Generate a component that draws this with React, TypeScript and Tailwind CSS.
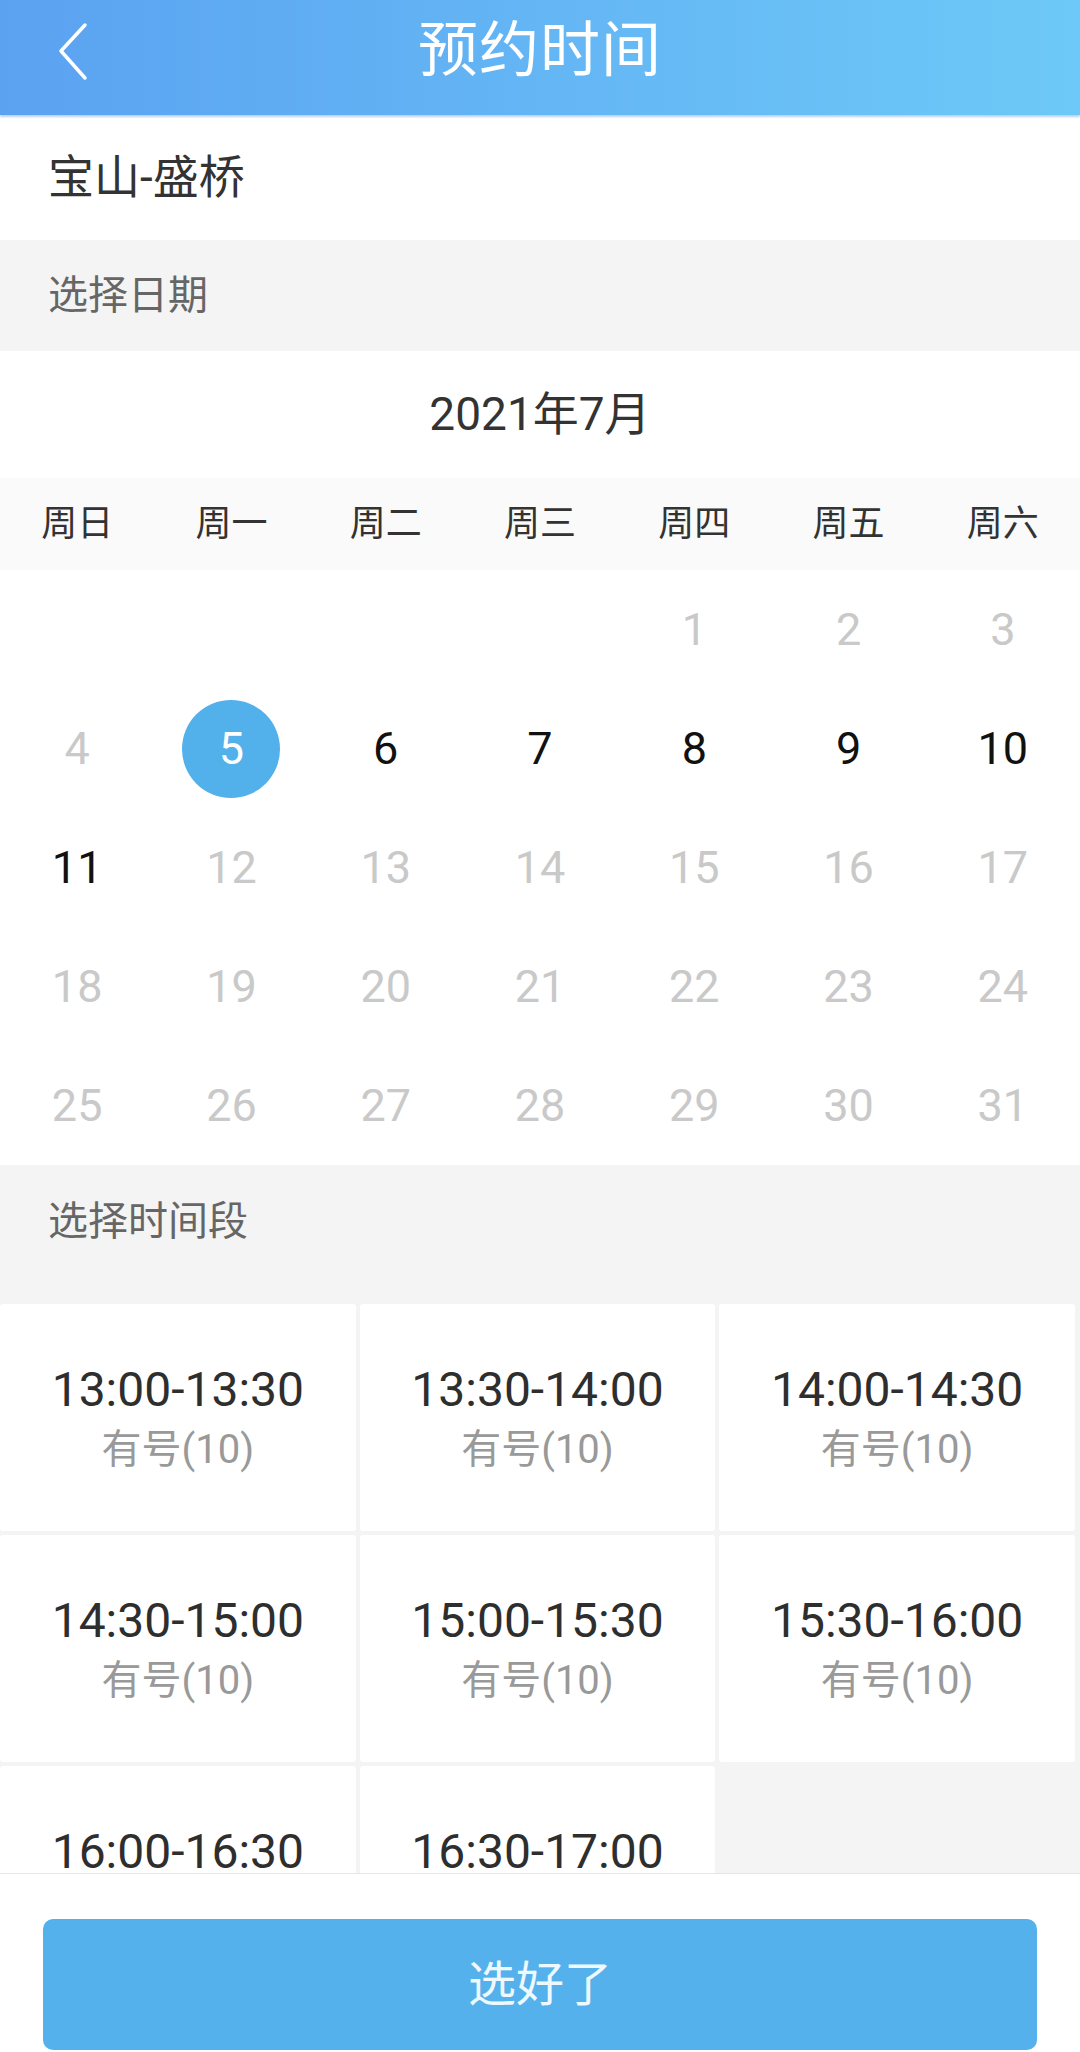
import React from 'react';

const font = { fontFamily: 'Roboto, "Noto Sans CJK SC", "Noto Sans", sans-serif' };

const weekdays = ['周日', '周一', '周二', '周三', '周四', '周五', '周六'];

const slots = [
  '13:00-13:30',
  '13:30-14:00',
  '14:00-14:30',
  '14:30-15:00',
  '15:00-15:30',
  '15:30-16:00',
  '16:00-16:30',
  '16:30-17:00',
];

// July 2021 starts on a Thursday
const days: (number | null)[] = [null, null, null, null, ...Array.from({ length: 31 }, (_, i) => i + 1)];

const selected = 5;
const open = [6, 7, 8, 9, 10, 11];

const DayCell = ({ day }: { day: number | null }) => {
  if (day === null) return <div className="h-[119px]" />;
  if (day === selected) {
    return (
      <div className="h-[119px] flex items-center justify-center">
        <div className="w-[98px] h-[98px] rounded-full bg-[#52b0ea] flex items-center justify-center text-white text-[45px]">
          {day}
        </div>
      </div>
    );
  }
  const active = open.includes(day);
  return (
    <div
      className={
        'h-[119px] flex items-center justify-center text-[45px] ' +
        (active ? 'text-[#111111]' : 'text-[#c9c9c9]')
      }
    >
      {day}
    </div>
  );
};

const App = () => {
  return (
    <div className="w-[1080px] h-[2052px] flex flex-col overflow-hidden bg-white" style={font}>
      {/* Header */}
      <header className="relative h-[115px] shrink-0 flex items-center justify-center bg-gradient-to-r from-[#5ba2f1] to-[#6dc9f7] shadow-[0_2px_2px_rgba(60,120,200,0.35)]">
        <button className="absolute left-[50px] top-[20px] w-[44px] h-[64px] flex items-center justify-center">
          <svg width="34" height="60" viewBox="0 0 34 60" fill="none">
            <path d="M30 3 L6 29 L30 56" stroke="#ffffff" strokeWidth="3.5" strokeLinecap="round" strokeLinejoin="round" />
          </svg>
        </button>
        <h1 className="text-white text-[60px] leading-none tracking-[1px] -mt-[14px]">预约时间</h1>
      </header>

      <main className="flex-1 overflow-hidden">
        {/* Location */}
        <div className="h-[125px] flex items-center pl-[48px] text-[46px] text-[#333333] bg-white">宝山-盛桥</div>

        {/* Date label */}
        <div className="h-[111px] flex items-center pl-[48px] text-[40px] text-[#666666] bg-[#f4f4f4]">选择日期</div>

        {/* Month */}
        <div className="h-[127px] flex items-center justify-center text-[46px] text-[#333333] bg-white">2021年7月</div>

        {/* Weekdays */}
        <div className="h-[92px] grid grid-cols-7 items-center bg-[#fafafa]">
          {weekdays.map((w) => (
            <div key={w} className="text-center text-[36px] text-[#333333]">
              {w}
            </div>
          ))}
        </div>

        {/* Days */}
        <div className="grid grid-cols-7 bg-white">
          {days.map((d, i) => (
            <DayCell key={i} day={d} />
          ))}
        </div>

        {/* Time label */}
        <div className="bg-[#f4f4f4]">
          <div className="h-[114px] flex items-center pl-[48px] text-[40px] text-[#666666]">选择时间段</div>
          <div className="grid grid-cols-3 gap-[4px] pt-[25px] pr-[5px]">
            {slots.map((s) => (
              <div key={s} className="h-[227px] bg-white rounded-[3px] flex flex-col items-center justify-center">
                <div className="text-[48px] leading-[64px] text-[#2e2e2e]">{s}</div>
                <div className="text-[40px] leading-[56px] text-[#999999]">有号(10)</div>
              </div>
            ))}
          </div>
        </div>
      </main>

      {/* Bottom bar */}
      <footer className="h-[179px] shrink-0 bg-white border-t border-[#e6e6e6] pt-[45px] px-[43px]">
        <button className="w-full h-[131px] rounded-[10px] bg-[#55b1ec] text-[#eef8ff] text-[48px]">选好了</button>
      </footer>
    </div>
  );
};

export default App;
